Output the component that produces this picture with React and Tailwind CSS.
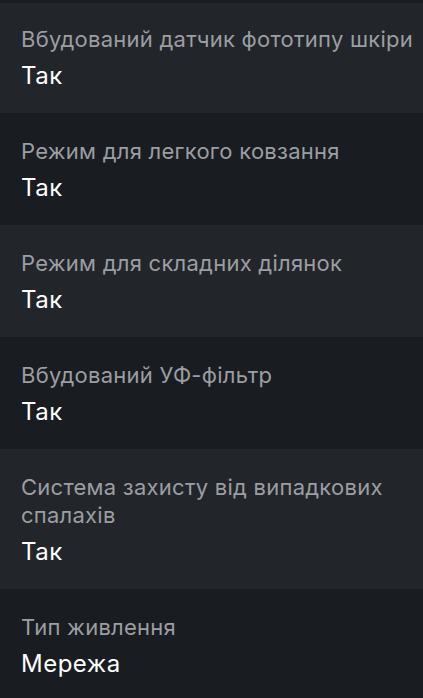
import React from 'react';

const specs = [
  { label: 'Вбудований датчик фототипу шкіри', value: 'Так' },
  { label: 'Режим для легкого ковзання', value: 'Так' },
  { label: 'Режим для складних ділянок', value: 'Так' },
  { label: 'Вбудований УФ-фільтр', value: 'Так' },
  { label: 'Система захисту від випадкових спалахів', value: 'Так' },
  { label: 'Тип живлення', value: 'Мережа' },
];

const App = () => (
  <div className="min-h-[698px] bg-[#191c20] border-t-[3px] border-[#191c20]" style={{ fontFamily: 'Inter, "Noto Sans", sans-serif' }}>
    {specs.map((s, i) => (
      <div
        key={s.label}
        className={`pl-[21px] pr-[4px] pb-[22px] ${i === 0 ? 'pt-[22px]' : 'pt-[24px]'} ${i % 2 === 0 ? 'bg-[#222529]' : 'bg-[#191c20]'}`}
      >
        <div className="text-[22px] leading-[28px] tracking-[0.25px] text-[#9b9ea2]">{s.label}</div>
        <div className="mt-[8px] text-[24px] leading-[30px] tracking-[0.5px] text-white">{s.value}</div>
      </div>
    ))}
  </div>
);

export default App;
